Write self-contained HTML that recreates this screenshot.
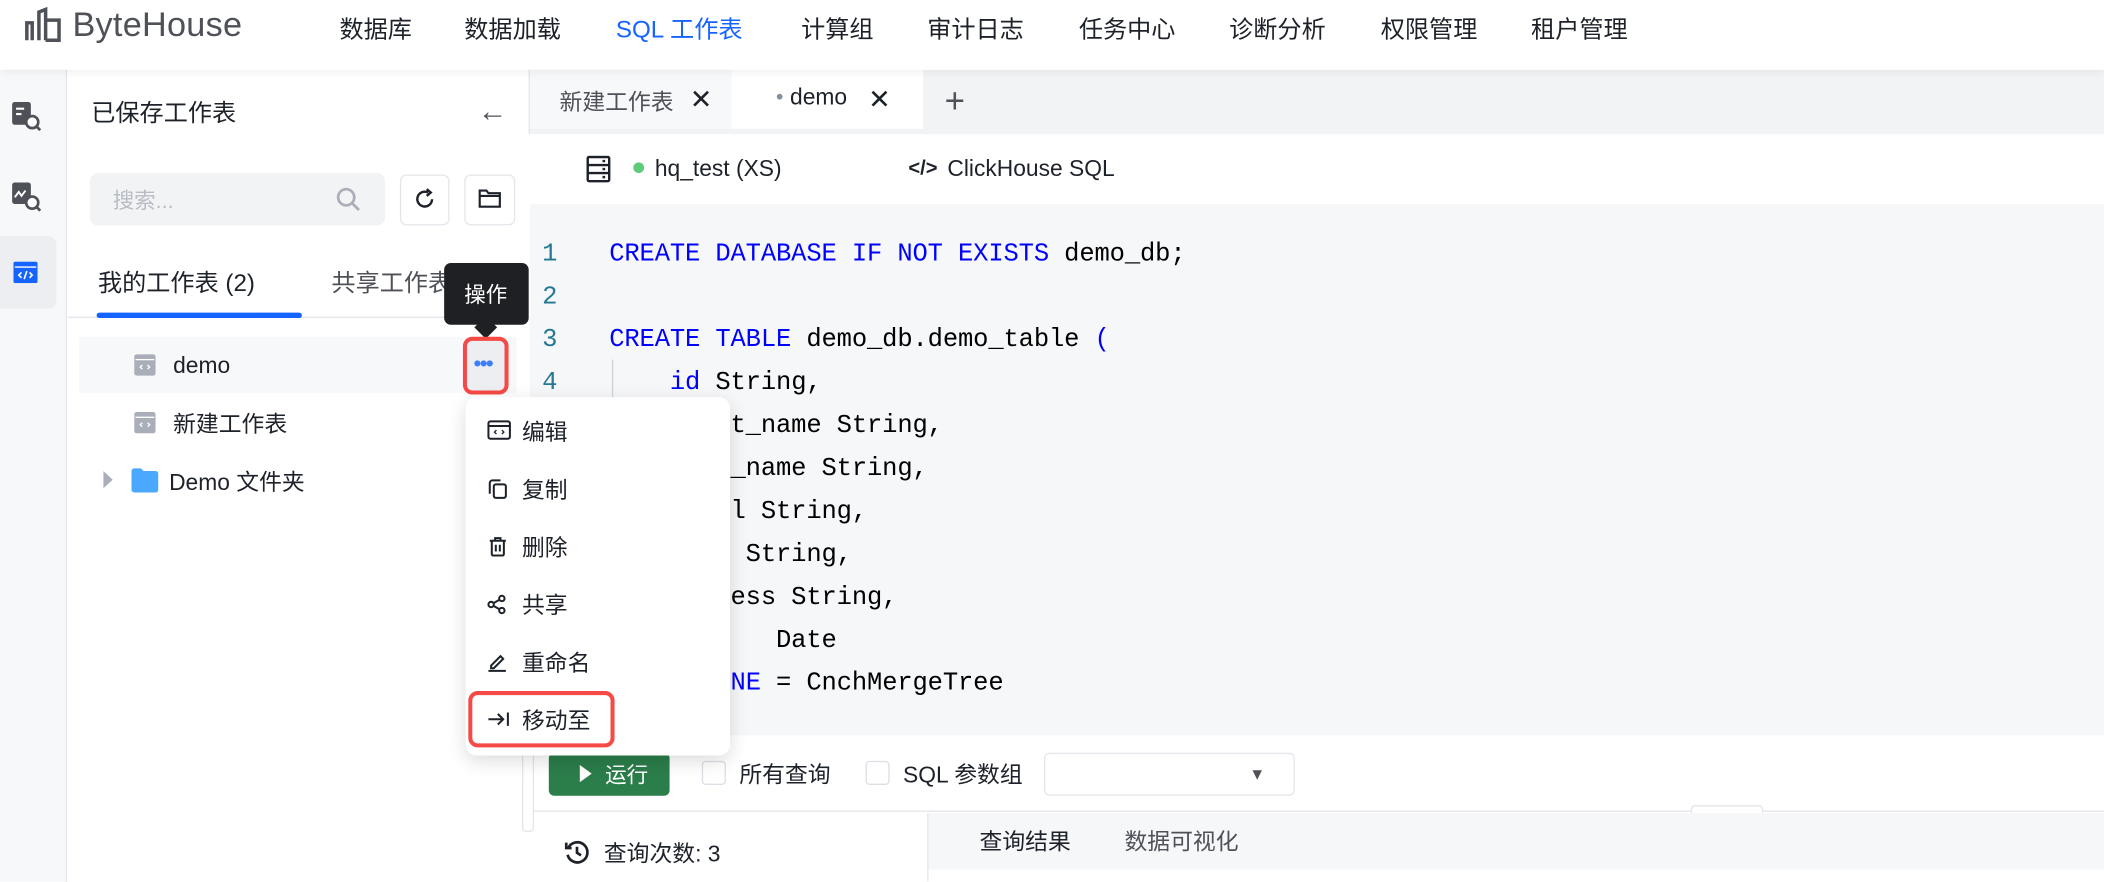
<!DOCTYPE html>
<html><head><meta charset="utf-8">
<style>
*{box-sizing:border-box;margin:0;padding:0}
html,body{width:2104px;height:882px;overflow:hidden;background:#fff}
#w{position:absolute;left:0;top:0;width:1568px;height:657px;transform:scale(1.34184);transform-origin:0 0;font-family:"Liberation Sans","Noto Sans CJK SC",sans-serif;color:#1d2129}
.a{position:absolute;white-space:nowrap}
.nav{font-size:18px;top:8px;color:#1d2129}
.code{font-family:"Liberation Mono","DejaVu Sans Mono",monospace;font-size:19px;color:#000}
.k{color:#0000ff}
.ln{font-family:"Liberation Mono",monospace;font-size:19px;color:#237893}
.mi{font-size:17px;color:#1d2129;left:389px}
</style></head><body><div id="w">
<!-- header -->
<div class="a" style="left:0;top:0;width:1568px;height:52px;background:#fff;box-shadow:0 2px 6px rgba(0,0,0,.06);z-index:2"></div>
<svg class="a" style="left:18px;top:5px;z-index:3" width="32" height="27" viewBox="0 0 32 27" fill="none" stroke="#4e5157" stroke-width="2.6"><path d="M2 25V12h4v13M11 25V4l5-2v23M16 10h10v15h-10"/></svg>
<div class="a" style="left:54px;top:5px;font-size:25.5px;color:#4e5157;z-index:3;letter-spacing:0.2px">ByteHouse</div>
<div style="position:absolute;z-index:3">
<div class="a nav" style="left:253px">数据库</div>
<div class="a nav" style="left:346px">数据加载</div>
<div class="a nav" style="left:459px;color:#1664ff">SQL 工作表</div>
<div class="a nav" style="left:597px">计算组</div>
<div class="a nav" style="left:691px">审计日志</div>
<div class="a nav" style="left:804px">任务中心</div>
<div class="a nav" style="left:916px">诊断分析</div>
<div class="a nav" style="left:1029px">权限管理</div>
<div class="a nav" style="left:1141px">租户管理</div>
</div>
<!-- rail -->
<div class="a" style="left:0;top:52px;width:50px;height:605px;background:#f7f8fa;border-right:1px solid #e5e6eb"></div>
<svg class="a" style="left:9px;top:76px" width="22" height="22" viewBox="0 0 22 22"><rect x="0" y="0" width="14" height="17" rx="2" fill="#4e5157"/><path d="M3 5h6M3 9h4" stroke="#fff" stroke-width="1.6"/><circle cx="15" cy="15" r="4.5" fill="#fff" stroke="#4e5157" stroke-width="2"/><path d="M18 18l3 3" stroke="#4e5157" stroke-width="2"/></svg>
<svg class="a" style="left:9px;top:136px" width="22" height="22" viewBox="0 0 22 22"><rect x="0" y="0" width="14" height="16" rx="2" fill="#4e5157"/><path d="M2 11l3-4 2 3 3-4" stroke="#fff" stroke-width="1.4" fill="none"/><circle cx="15" cy="15" r="4.5" fill="#fff" stroke="#4e5157" stroke-width="2"/><path d="M18 18l3 3" stroke="#4e5157" stroke-width="2"/></svg>
<div class="a" style="left:0;top:176px;width:42px;height:54px;background:#eceef2;border-radius:0 6px 6px 0"></div>
<svg class="a" style="left:10px;top:195px" width="18" height="16" viewBox="0 0 18 16"><rect width="18" height="16" rx="1.5" fill="#1664ff"/><path d="M1 4h16" stroke="#fff" stroke-width="1"/><path d="M6 8l-2 2 2 2M12 8l2 2-2 2M10 7l-2 6" stroke="#fff" stroke-width="1.2" fill="none"/></svg>
<!-- left panel -->
<div class="a" style="left:68px;top:70px;font-size:18px">已保存工作表</div>
<div class="a" style="left:356px;top:70px;font-size:22px;color:#4e5157">←</div>
<div class="a" style="left:67px;top:129px;width:220px;height:39px;background:#f2f3f5;border-radius:6px"></div>
<div class="a" style="left:84px;top:136px;font-size:16px;color:#b8bcc4">搜索...</div>
<svg class="a" style="left:250px;top:139px" width="20" height="20" viewBox="0 0 20 20" fill="none" stroke="#a9aeb8" stroke-width="2"><circle cx="8" cy="8" r="6"/><path d="M12.5 12.5l5 5"/></svg>
<div class="a" style="left:298px;top:130px;width:37px;height:38px;border:1px solid #e5e6eb;border-radius:5px"></div>
<svg class="a" style="left:307px;top:139px" width="19" height="19" viewBox="0 0 19 19" fill="none" stroke="#1d2129" stroke-width="1.8"><path d="M15 9.5A5.5 5.5 0 1 1 12 4.5"/><path d="M11 2l3 2.5-3 2.5"/></svg>
<div class="a" style="left:346px;top:130px;width:38px;height:38px;border:1px solid #e5e6eb;border-radius:5px"></div>
<svg class="a" style="left:356px;top:140px" width="18" height="16" viewBox="0 0 18 16" fill="none" stroke="#1d2129" stroke-width="1.6"><path d="M1.5 2h5l1.5 2h8.5v10h-15z"/><path d="M1.5 6h15"/></svg>
<div class="a" style="left:73px;top:197px;font-size:18px">我的工作表 (2)</div>
<div class="a" style="left:247px;top:197px;font-size:18px;color:#4e5157">共享工作表 (0)</div>
<div class="a" style="left:51px;top:236px;width:342px;height:1px;background:#e5e6eb"></div>
<div class="a" style="left:72px;top:233px;width:153px;height:4px;background:#1664ff;border-radius:2px"></div>
<div class="a" style="left:59px;top:251px;width:326px;height:42px;background:#f7f8fa"></div>
<svg class="a" style="left:100px;top:264px" width="16" height="16" viewBox="0 0 16 16"><rect width="16" height="16" rx="2" fill="#a9aeb8"/><path d="M1 4h14" stroke="#fff"/><path d="M6 8l-1.5 1.5L6 11M10 8l1.5 1.5L10 11" stroke="#fff" stroke-width="1" fill="none"/></svg>
<div class="a" style="left:129px;top:263px;font-size:17px">demo</div>
<svg class="a" style="left:100px;top:307px" width="16" height="16" viewBox="0 0 16 16"><rect width="16" height="16" rx="2" fill="#a9aeb8"/><path d="M1 4h14" stroke="#fff"/><path d="M6 8l-1.5 1.5L6 11M10 8l1.5 1.5L10 11" stroke="#fff" stroke-width="1" fill="none"/></svg>
<div class="a" style="left:129px;top:302px;font-size:17px">新建工作表</div>
<svg class="a" style="left:77px;top:351px" width="8" height="13"><path d="M0 0l7 6.5L0 13z" fill="#a9aeb8"/></svg>
<svg class="a" style="left:98px;top:349px" width="20" height="18" viewBox="0 0 20 18"><path d="M0 2a2 2 0 0 1 2-2h5l2 2h9a2 2 0 0 1 2 2v12a2 2 0 0 1-2 2H2a2 2 0 0 1-2-2z" fill="#4aa8ff"/></svg>
<div class="a" style="left:126px;top:345px;font-size:17px">Demo 文件夹</div>
<!-- tooltip -->
<div class="a" style="left:331px;top:196px;width:63px;height:46px;background:#1f2023;border-radius:5px;z-index:5"></div>
<div class="a" style="left:356px;top:238px;width:12px;height:12px;background:#1f2023;transform:rotate(45deg);z-index:5"></div>
<div class="a" style="left:346px;top:206px;font-size:16px;color:#fff;z-index:6">操作</div>
<div class="a" style="left:345px;top:251px;width:34px;height:43px;border:3px solid #f54a45;border-radius:7px;background:#eceef1;z-index:5"></div>
<div class="a" style="left:353px;top:263px;font-size:16px;color:#3c7eff;font-weight:bold;z-index:6;letter-spacing:-1px">•••</div>
<!-- right: tab bar -->
<div class="a" style="left:394px;top:52px;width:1174px;height:48px;background:#f2f3f5;border-left:1px solid #e5e6eb"></div>
<div class="a" style="left:395px;top:52px;width:150px;height:44px;background:#f7f8fa"></div>
<div class="a" style="left:417px;top:62px;font-size:17px;color:#4e5157">新建工作表</div>
<div class="a" style="left:514px;top:62px;font-size:20px;color:#1d2129">✕</div>
<div class="a" style="left:545px;top:52px;width:143px;height:44px;background:#fff"></div>
<div class="a" style="left:578px;top:63px;font-size:17px"><span style="font-size:10px;color:#86909c;vertical-align:3px">●</span> demo</div>
<div class="a" style="left:647px;top:62px;font-size:20px">✕</div>
<div class="a" style="left:704px;top:60px;font-size:26px;color:#4e5157;font-weight:300">+</div>
<!-- toolbar -->
<div class="a" style="left:395px;top:100px;width:1173px;height:52px;background:#fff"></div>
<svg class="a" style="left:437px;top:116px" width="18" height="20" viewBox="0 0 18 20" fill="none" stroke="#1d2129" stroke-width="1.8"><rect x="1" y="1" width="16" height="18" rx="1"/><path d="M1 7h16M1 13h16M12 4h2M12 10h2M12 16h2"/></svg>
<div class="a" style="left:472px;top:121px;width:8px;height:8px;border-radius:50%;background:#5ecb7c"></div>
<div class="a" style="left:488px;top:116px;font-size:17px;color:#1d2129">hq_test (XS)</div>
<div class="a" style="left:677px;top:117px;font-size:15px;font-weight:bold">&lt;/&gt;</div>
<div class="a" style="left:706px;top:116px;font-size:17px">ClickHouse SQL</div>
<!-- editor -->
<div class="a" style="left:395px;top:152px;width:1173px;height:396px;background:#f6f7f9"></div>
<div class="a ln" style="left:404px;top:178px">1</div>
<div class="a ln" style="left:404px;top:210px">2</div>
<div class="a ln" style="left:404px;top:242px">3</div>
<div class="a ln" style="left:404px;top:274px">4</div>
<div class="a" style="left:456px;top:268px;width:1px;height:32px;background:#d0d3d9"></div>
<div class="a code" style="left:454px;top:173px;line-height:32px;white-space:pre;letter-spacing:-0.1px"><span class="k">CREATE DATABASE IF NOT EXISTS</span> demo_db;

<span class="k">CREATE TABLE</span> demo_db.demo_table <span class="k">(</span>
    <span class="k">id</span> String,
    first_name String,
    last_name String,
    email String,
    dept String,
    address String,
    born   Date
    <span class="k">ENGINE</span> = CnchMergeTree</div>
<!-- bottom bar -->
<div class="a" style="left:395px;top:548px;width:1173px;height:57px;background:#fff;border-bottom:1px solid #e5e6eb"></div>
<div class="a" style="left:389px;top:552px;width:9px;height:68px;background:#fff;border:1px solid #e5e6eb;border-radius:3px"></div>
<div class="a" style="left:409px;top:561px;width:90px;height:32px;background:#2b7d4a;border-radius:4px"></div>
<svg class="a" style="left:432px;top:570px" width="9" height="13"><path d="M0 0l9 6.5L0 13z" fill="#fff"/></svg>
<div class="a" style="left:451px;top:564px;font-size:16px;color:#fff">运行</div>
<div class="a" style="left:523px;top:567px;width:18px;height:18px;border:1px solid #dcdfe5;border-radius:3px"></div>
<div class="a" style="left:551px;top:563px;font-size:17px">所有查询</div>
<div class="a" style="left:645px;top:567px;width:18px;height:18px;border:1px solid #dcdfe5;border-radius:3px"></div>
<div class="a" style="left:673px;top:563px;font-size:17px">SQL 参数组</div>
<div class="a" style="left:778px;top:561px;width:187px;height:32px;border:1px solid #e5e6eb;border-radius:4px"></div>
<div class="a" style="left:931px;top:570px;font-size:12px;color:#4e5157">▼</div>
<div class="a" style="left:1260px;top:600px;width:54px;height:9px;background:#fff;border:1px solid #e5e6eb;border-radius:3px"></div>
<div class="a" style="left:691px;top:606px;width:1px;height:51px;background:#e5e6eb"></div>
<div class="a" style="left:692px;top:606px;width:876px;height:42px;background:#f6f7f9"></div>
<svg class="a" style="left:420px;top:625px" width="20" height="20" viewBox="0 0 20 20" fill="none" stroke="#1d2129" stroke-width="2"><path d="M3.5 7A7.5 7.5 0 1 1 3 12"/><path d="M2 3v4h4"/><path d="M10 6v4.5l3 2"/></svg>
<div class="a" style="left:450px;top:622px;font-size:17px">查询次数: 3</div>
<div class="a" style="left:730px;top:613px;font-size:17px">查询结果</div>
<div class="a" style="left:838px;top:613px;font-size:17px;color:#4e5157">数据可视化</div>
<!-- dropdown -->
<div class="a" style="left:347px;top:296px;width:197px;height:267px;background:#fff;border-radius:8px;box-shadow:0 4px 14px rgba(0,0,0,.14);z-index:7">
</div>
<div style="position:absolute;left:0;top:0;z-index:8">
<svg class="a" style="left:363px;top:313px" width="18" height="15" viewBox="0 0 18 15" fill="none" stroke="#1d2129" stroke-width="1.5"><rect x="1" y="1" width="16" height="13" rx="1.5"/><path d="M1 4.5h16"/><path d="M7 7.5l-1.5 1.5L7 10.5M11 7.5l1.5 1.5L11 10.5" stroke-width="1"/></svg>
<div class="a mi" style="top:308px">编辑</div>
<svg class="a" style="left:364px;top:357px" width="14" height="15" viewBox="0 0 14 15" fill="none" stroke="#1d2129" stroke-width="1.5"><path d="M1 11V3a2 2 0 0 1 2-2h6"/><rect x="4" y="4" width="9" height="10" rx="1.5"/></svg>
<div class="a mi" style="top:351px">复制</div>
<svg class="a" style="left:364px;top:400px" width="14" height="15" viewBox="0 0 14 15" fill="none" stroke="#1d2129" stroke-width="1.5"><path d="M1 3h12M5 3V1h4v2M2.5 3v10a1 1 0 0 0 1 1h7a1 1 0 0 0 1-1V3M5.5 6v5M8.5 6v5"/></svg>
<div class="a mi" style="top:394px">删除</div>
<svg class="a" style="left:363px;top:443px" width="15" height="15" viewBox="0 0 15 15" fill="none" stroke="#1d2129" stroke-width="1.5"><circle cx="11" cy="3" r="2"/><circle cx="3" cy="7.5" r="2"/><circle cx="11" cy="12" r="2"/><path d="M9.2 4L4.8 6.5M4.8 8.5l4.4 2.5"/></svg>
<div class="a mi" style="top:437px">共享</div>
<svg class="a" style="left:363px;top:486px" width="15" height="15" viewBox="0 0 15 15" fill="none" stroke="#1d2129" stroke-width="1.5"><path d="M3 10l7-7 2 2-7 7H3zM1 14h13"/></svg>
<div class="a mi" style="top:480px">重命名</div>
<div class="a" style="left:349px;top:515px;width:109px;height:42px;border:3px solid #f54a45;border-radius:7px"></div>
<svg class="a" style="left:363px;top:530px" width="17" height="12" viewBox="0 0 17 12" fill="none" stroke="#1d2129" stroke-width="1.5"><path d="M1 6h11M8 2l4 4-4 4M15.5 1v10"/></svg>
<div class="a mi" style="top:523px">移动至</div>
</div>
</div></body></html>
